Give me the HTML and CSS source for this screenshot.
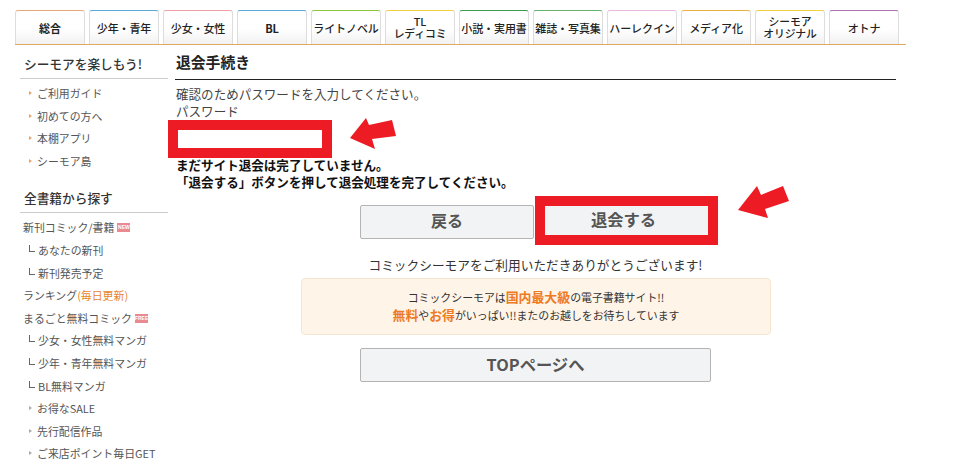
FILE: index.html
```html
<!DOCTYPE html>
<html lang="ja">
<head>
<meta charset="utf-8">
<title>退会手続き</title>
<link rel="stylesheet" href="styles.css">
</head>
<body>
<div class="page">
  <nav class="tabs">
    <a class="tab c1 strong">総合</a>
    <a class="tab c2">少年・青年</a>
    <a class="tab c3">少女・女性</a>
    <a class="tab c2 strong">BL</a>
    <a class="tab c5">ライトノベル</a>
    <a class="tab c6 two"><span>TL</span><span>レディコミ</span></a>
    <a class="tab c7">小説・実用書</a>
    <a class="tab c8">雑誌・写真集</a>
    <a class="tab c9">ハーレクイン</a>
    <a class="tab c10">メディア化</a>
    <a class="tab c6 two"><span>シーモア</span><span>オリジナル</span></a>
    <a class="tab c12">オトナ</a>
  </nav>
  <div class="columns">
    <aside class="side">
      <h3 class="side-head">シーモアを楽しもう!</h3>
      <ul class="side-list first">
        <li class="tri orange">ご利用ガイド</li>
        <li class="tri orange">初めての方へ</li>
        <li class="tri orange">本棚アプリ</li>
        <li class="tri orange">シーモア島</li>
      </ul>
      <h3 class="side-head second">全書籍から探す</h3>
      <ul class="side-list rest">
        <li class="top">新刊コミック/書籍<b class="badge">NEW</b></li>
        <li class="sub">あなたの新刊</li>
        <li class="sub">新刊発売予定</li>
        <li class="top">ランキング<span class="daily">(毎日更新)</span></li>
        <li class="top">まるごと無料コミック<b class="badge">FREE</b></li>
        <li class="sub">少女・女性無料マンガ</li>
        <li class="sub">少年・青年無料マンガ</li>
        <li class="sub">BL無料マンガ</li>
        <li class="tri">お得なSALE</li>
        <li class="tri">先行配信作品</li>
        <li class="tri">ご来店ポイント毎日GET</li>
      </ul>
    </aside>
    <main class="main">
      <h2 class="title">退会手続き</h2>
      <p class="line">確認のためパスワードを入力してください。</p>
      <p class="line pw">パスワード</p>
      <div class="field"></div>
      <p class="notice">まだサイト退会は完了していません。<br>「退会する」ボタンを押して退会処理を完了してください。</p>
      <div class="actions">
        <a class="btn back">戻る</a>
        <a class="btn quit">退会する</a>
      </div>
      <p class="thanks">コミックシーモアをご利用いただきありがとうございます!</p>
      <div class="promo">
        <p>コミックシーモアは<em>国内最大級</em>の電子書籍サイト!!</p>
        <p><em>無料</em>や<em>お得</em>がいっぱい!!またのお越しをお待ちしています</p>
      </div>
      <a class="btn totop">TOPページへ</a>
    </main>
  </div>
  <svg class="arrows" width="959" height="470" viewBox="0 0 959 470" aria-hidden="true">
    <polygon points="350,138 366,118 369,125 392,120 396,136 372,139 375,149" fill="#ed1c24"/>
    <polygon points="738,210 757,186 761,195 783,186 789,201 765,209 768,218" fill="#ed1c24"/>
  </svg>
</div>
</body>
</html>
```

FILE: styles.css
```css
* { box-sizing: border-box; }
html, body { margin: 0; padding: 0; background: #fff; }
body {
  font-family: "Noto Sans CJK JP", "Liberation Sans", sans-serif;
  color: #333;
  overflow: hidden;
}
p, h2, h3, ul { margin: 0; padding: 0; }
ul { list-style: none; }
.page { position: relative; width: 959px; height: 470px; overflow: hidden; }

/* tabs */
.tabs {
  display: flex;
  gap: 4px;
  width: 891px;
  height: 35px;
  margin: 10px 0 0 15px;
  border-bottom: 1px solid #e0a860;
}
.tab {
  display: flex;
  flex-direction: column;
  align-items: center;
  justify-content: center;
  flex: 0 0 70px;
  height: 34px;
  border: 1px solid #ddd;
  border-top: 1px solid #e0a060;
  border-bottom: 0;
  border-radius: 3px 3px 0 0;
  background: linear-gradient(#fff 55%, #f1f1f1);
  color: #222;
  font-size: 11px;
  line-height: 12px;
  white-space: nowrap;
  letter-spacing: -0.1px;
  font-weight: 500;
}
.tab.strong { font-weight: 700; font-size: 11px; }
.tab.two { font-size: 10.8px; padding-bottom: 2px; }
.tab.two span { display: block; height: 12px; overflow: visible; }
.c1 { border-top-color: #e6a878; }
.c2 { border-top-color: #5aa9d6; }
.c3 { border-top-color: #eda0a8; }
.c5 { border-top-color: #8cc63f; }
.c6 { border-top-color: #f0d040; }
.c7 { border-top-color: #3a9a50; }
.c8 { border-top-color: #66b070; }
.c9 { border-top-color: #e8b8e0; }
.c10 { border-top-color: #e8b040; }
.c12 { border-top-color: #b070b0; }

/* columns */
.columns { display: flex; margin-left: 20px; }
.side { flex: 0 0 148px; padding-top: 9px; }
.side-head {
  height: 25px;
  padding-left: 4px;
  border-bottom: 1px solid #ccc;
  font-size: 12.7px;
  line-height: 20px;
  font-weight: 500;
  color: #333;
}
.side-head.second { margin-top: 16px; }
.side-list { font-size: 10.9px; color: #555; }
.side-list li { height: 22.6px; line-height: 22px; white-space: nowrap; }
.side-list.first { padding-top: 3px; }
.side-list.first li { line-height: 23px; }
.side-list.rest { padding-top: 3px; }
.side-list .top { padding-left: 3px; }
.tri, .sub { position: relative; padding-left: 17px; }
.tri::before {
  content: "";
  position: absolute;
  left: 9px;
  top: 9px;
  border-left: 3px solid #aaa;
  border-top: 2.5px solid transparent;
  border-bottom: 2.5px solid transparent;
}
.tri.orange::before { border-left-color: #eda35c; }
.sub::before {
  content: "";
  position: absolute;
  left: 9px;
  top: 6px;
  width: 5px;
  height: 6px;
  border-left: 1px solid #666;
  border-bottom: 1px solid #666;
}
.sub { padding-left: 18px; }
.badge {
  display: inline-block;
  width: 13px;
  height: 9px;
  margin-left: 3px;
  overflow: hidden;
  background: #e88a90;
  color: #fff;
  font: 700 5px/9px "Liberation Sans", sans-serif;
  text-align: center;
  vertical-align: 0;
}
.daily { color: #e8862a; }

/* main */
.main {
  flex: 0 0 721px;
  margin-left: 7px;
  display: flex;
  flex-direction: column;
  font-size: 12.55px;
  color: #444;
}
.title {
  height: 35px;
  padding: 7px 0 0 1px;
  border-bottom: 1px solid #222;
  font-size: 14.8px;
  line-height: 20px;
  font-weight: 700;
  color: #222;
}
.line { padding-left: 1px; line-height: 17px; white-space: nowrap; }
.line:first-of-type { margin-top: 5px; }
.field {
  width: 164px;
  height: 38px;
  margin: 1px 0 0 -7px;
  border: 10px solid #ed1c24;
  background: #fff;
}
.notice {
  margin-top: -2px;
  padding-left: 1px;
  font-weight: 700;
  line-height: 17px;
  color: #111;
}
.actions {
  display: flex;
  align-items: center;
  margin: 6px 0 0 185px;
}
.btn {
  display: flex;
  align-items: center;
  justify-content: center;
  padding-bottom: 3px;
  background: #f2f3f4;
  border: 1px solid #b4b4b4;
  border-radius: 2px;
  font-weight: 700;
  color: #555;
  font-size: 16px;
}
.back { width: 174px; height: 34px; margin-top: 2px; }
.quit {
  width: 183px;
  height: 49px;
  margin-left: 1px;
  padding-right: 6px;
  border: 10px solid #ed1c24;
  border-radius: 0;
  font-size: 16.3px;
}
.thanks { margin-top: 11px; text-align: center; line-height: 17px; font-size: 12.7px; color: #333; }
.promo {
  width: 470px;
  height: 57px;
  margin: 5px 0 0 126px;
  padding-top: 9px;
  background: #fff4e8;
  border: 1px solid #f6e6cf;
  border-radius: 4px;
  text-align: center;
  font-size: 10.9px;
  line-height: 17px;
  color: #333;
}
.promo em { font-style: normal; font-weight: 700; color: #ee7b22; font-size: 12.9px; }
.totop {
  width: 351px;
  height: 34px;
  margin: 13px 0 0 185px;
  font-size: 16.3px;
}
.arrows { position: absolute; left: 0; top: 0; pointer-events: none; }
```
